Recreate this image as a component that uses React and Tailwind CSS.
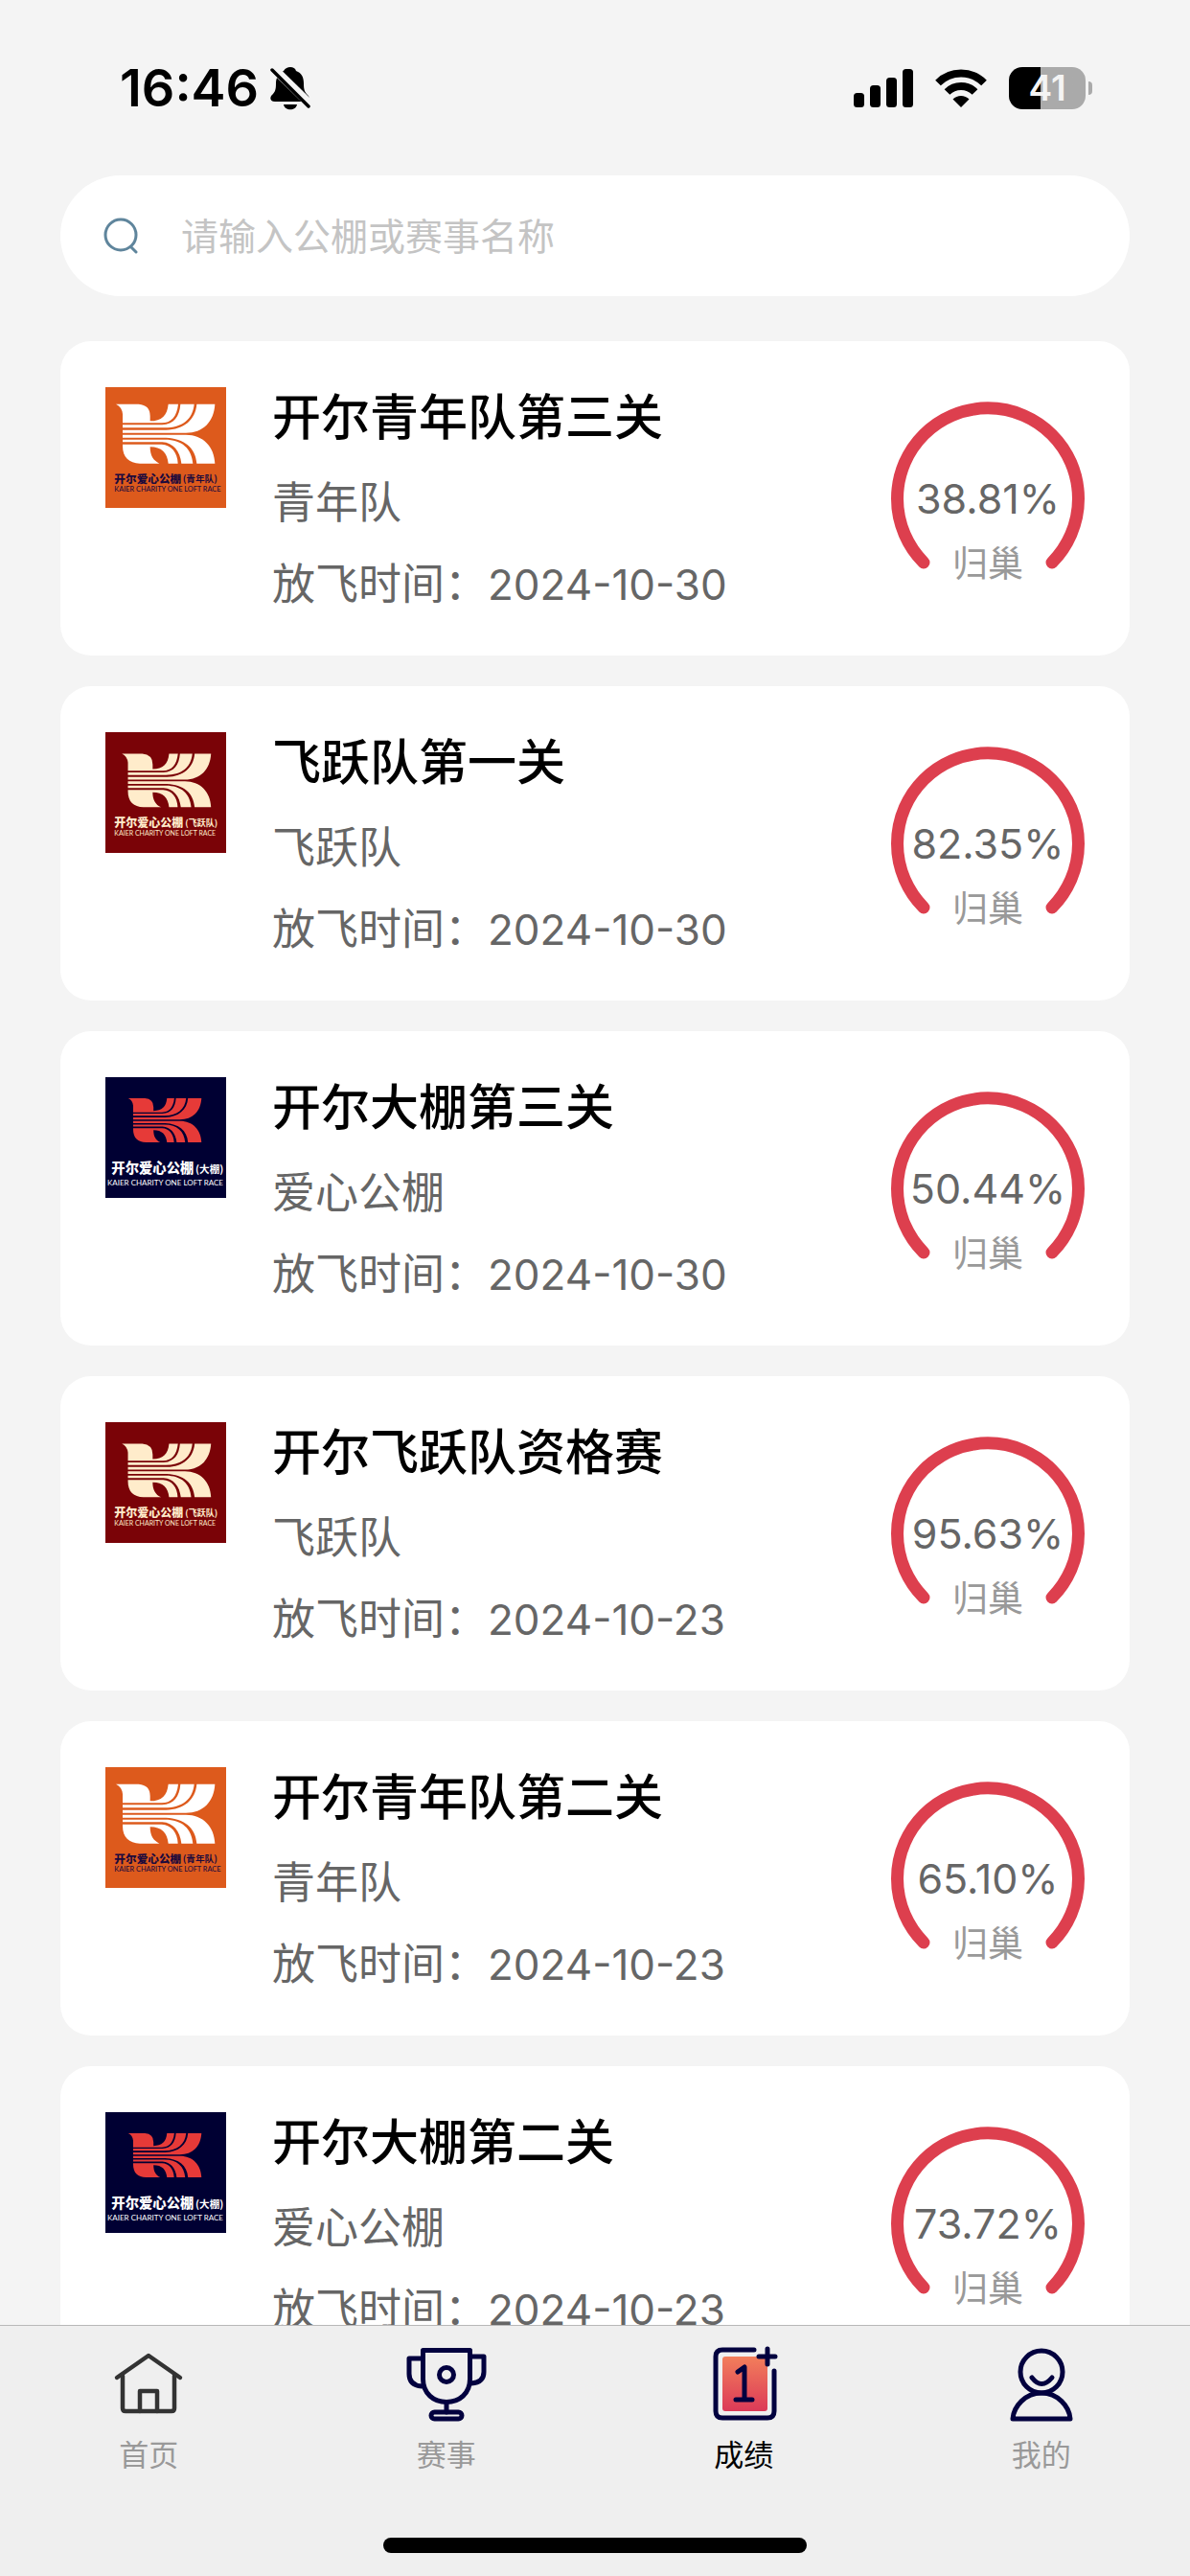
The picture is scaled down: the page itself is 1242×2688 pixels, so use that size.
import React, { useState } from "react";

const races = [
  { id: 1, title: "开尔青年队第三关", team: "青年队", date: "2024-10-30", rate: "38.81%", logo: "youth" },
  { id: 2, title: "飞跃队第一关", team: "飞跃队", date: "2024-10-30", rate: "82.35%", logo: "leap" },
  { id: 3, title: "开尔大棚第三关", team: "爱心公棚", date: "2024-10-30", rate: "50.44%", logo: "loft" },
  { id: 4, title: "开尔飞跃队资格赛", team: "飞跃队", date: "2024-10-23", rate: "95.63%", logo: "leap" },
  { id: 5, title: "开尔青年队第二关", team: "青年队", date: "2024-10-23", rate: "65.10%", logo: "youth" },
  { id: 6, title: "开尔大棚第二关", team: "爱心公棚", date: "2024-10-23", rate: "73.72%", logo: "loft" },
];

const logos = {
  youth: {
    bg: "#dd5a1c",
    mark: "#ffffff",
    text: "#1d0a3c",
    place: "translate(0 0)",
    name: { x: 28, y: 299, size: 35 },
    tag: { value: "(青年队)", x: 242, y: 298, size: 29 },
    sub: { x: 28, y: 327, size: 22, weight: 500 },
  },
  leap: {
    bg: "#7a0307",
    mark: "#ffeccb",
    text: "#ffeccb",
    place: "translate(22 20) scale(0.9)",
    name: { x: 28, y: 297, size: 36 },
    tag: { value: "(飞跃队)", x: 250, y: 295, size: 27 },
    sub: { x: 28, y: 324, size: 21, weight: 400 },
  },
  loft: {
    bg: "#000033",
    mark: "#e63a38",
    text: "#ffffff",
    place: "translate(47 27) scale(0.74)",
    name: { x: 19, y: 300, size: 43 },
    tag: { value: "(大棚)", x: 282, y: 300, size: 32 },
    sub: { x: 6, y: 339, size: 24, weight: 400 },
  },
};

function ClubLogo({ kind }) {
  const { bg, mark, text, place, name, tag, sub } = logos[kind];
  return (
    <svg viewBox="0 0 378 378" className="size-[126px] shrink-0" fill={text}>
      <rect width="378" height="378" fill={bg} />
      <g transform={place} fill={mark}>
        {/* upper wing */}
        <path d="M33 53H104Q140 56 140 90V106C176 106 194 88 197 53H228C224 92 206 112 176 112H54V84Q52 62 33 53Z" />
        <path d="M235 53H278C274 100 240 127 186 127H54V118H178C214 116 232 92 235 53Z" />
        <path d="M286 53H343C340 108 306 143 252 143H54V134H190C246 132 282 102 286 53Z" />
        {/* lower wing */}
        <path d="M54 149H252C306 149 341 186 343 239H286C282 188 246 161 190 158H54Z" />
        <path d="M54 164H186C240 164 270 192 274 239H238C234 200 212 174 178 172H54Z" />
        <path d="M54 179H176C206 180 226 204 227 239H197C194 206 176 187 140 187C140 214 150 230 169 239H108C74 238 54 220 54 184Z" />
      </g>
      <text
        x={name.x}
        y={name.y}
        fontSize={name.size}
        className="font-['Noto_Sans_CJK_SC',sans-serif] font-black"
      >
        开尔爱心公棚
      </text>
      <text
        x={tag.x}
        y={tag.y}
        fontSize={tag.size}
        className="font-['Noto_Sans_CJK_SC',sans-serif] font-bold"
      >
        {tag.value}
      </text>
      <text
        x={sub.x}
        y={sub.y}
        fontSize={sub.size}
        fontWeight={sub.weight}
        className="font-['Lato',sans-serif]"
      >
        KAIER CHARITY ONE LOFT RACE
      </text>
    </svg>
  );
}

function StatusBar() {
  return (
    <header className="flex h-[183px] shrink-0 items-start justify-between pt-[60px] pr-[102px] pl-[125px]">
      <div className="flex h-16 items-center gap-3">
        <span className="text-[54px] leading-[64px] font-semibold">16:46</span>
        <svg viewBox="0 0 42 46" className="h-[46px] w-[42px]">
          <path
            d="M21 1c3 0 5 1 6 4 6 2 8 7 8 13 0 7 1 9 4 12 3 3 2 7-2 7H5c-5 0-6-4-3-7 3-3 4-5 4-12 0-6 3-11 8-13 2-3 4-4 7-4Z"
          />
          <path d="M14 40h14c-1 7-13 7-14 0Z" />
          <path d="M1 0 42 40" stroke="#f4f4f4" strokeWidth="9" />
          <path d="M2 4 40 42" stroke="#000" strokeWidth="3.5" strokeLinecap="round" />
        </svg>
      </div>
      <div className="flex h-16 items-center gap-[23px]">
        <svg viewBox="0 0 62 40" className="h-10 w-[62px]">
          <rect x="0" y="25" width="11" height="15" rx="3.5" />
          <rect x="17" y="17" width="11" height="23" rx="3.5" />
          <rect x="34" y="9" width="11" height="31" rx="3.5" />
          <rect x="51" y="0" width="11" height="40" rx="3.5" />
        </svg>
        <svg viewBox="0 0 54 40" className="h-10 w-[54px]" fill="none" stroke="#000" strokeWidth="8">
          <path d="M3 14.500a34 34 0 0 1 48 0" />
          <path d="M12.500 24a20.500 20.500 0 0 1 29 0" />
          <path d="M18.500 31.500a12 12 0 0 1 17 0L27 40Z" fill="#000" stroke="none" />
        </svg>
        <div className="flex items-center gap-[3px]">
          <div className="flex h-11 w-20 items-center justify-center rounded-[14px] bg-linear-to-r from-black from-41% to-[#aaaaaa] to-41% text-[37px] leading-[44px] font-semibold text-[#f4f4f4]">
            41
          </div>
          <div className="h-[14px] w-1 rounded-r-full bg-[#aaaaaa]" />
        </div>
      </div>
    </header>
  );
}

function RateGauge({ rate }) {
  return (
    <div className="relative flex size-[202px] shrink-0 flex-col items-center pt-[74px]">
      <svg viewBox="0 0 202 202" className="absolute inset-0 size-full" fill="none">
        <path
          d="M34 168A94.500 94.500 0 1 1 168 168"
          stroke="#dd3f4e"
          strokeWidth="13"
          strokeLinecap="round"
        />
      </svg>
      <span className="text-[43px] leading-[54px] text-[#666666]">{rate}</span>
      <span className="mt-4 text-[37px] leading-[52px] text-[#999999]">归巢</span>
    </div>
  );
}

function RaceCard({ race }) {
  return (
    <li className="flex h-[328px] shrink-0 rounded-[32px] bg-white px-[47px] pt-12">
      <ClubLogo kind={race.logo} />
      <div className="ml-12 flex-1">
        <h2 className="text-[51px] leading-[64px] font-medium">{race.title}</h2>
        <p className="mt-[25px] text-[45px] leading-[64px] text-[#666666]">{race.team}</p>
        <p className="mt-[21px] text-[45px] leading-[64px] text-[#666666]">
          放飞时间：<time className="text-[44px]">{race.date}</time>
        </p>
      </div>
      <div className="pt-[15px]">
        <RateGauge rate={race.rate} />
      </div>
    </li>
  );
}

function HomeIcon() {
  return (
    <svg viewBox="0 0 84 84" className="size-[84px]" fill="none" stroke="#333333" strokeWidth="4.500" strokeLinecap="round" strokeLinejoin="round">
      <path d="M9 36 42 13 75 36" />
      <path d="M15 34v34q0 3 3 3h48q3 0 3-3V34" />
      <path d="M33 71V50h18v21" />
    </svg>
  );
}

function TrophyIcon() {
  return (
    <svg viewBox="0 0 84 84" className="size-[84px]" fill="none" stroke="#02013f" strokeWidth="5" strokeLinecap="round" strokeLinejoin="round">
      <path d="M17.500 7.500h49v30c0 15-11 24-24.500 24s-24.500-9-24.500-24Z" />
      <path d="M17 16H3v16q0 12 13 13M67 14h14v16q0 11-13 12" />
      <circle cx="42" cy="33" r="7.500" />
      <path d="M42 62v10" />
      <rect x="26" y="72" width="32" height="7" rx="3.500" />
    </svg>
  );
}

function ScoreIcon() {
  return (
    <svg viewBox="0 0 84 84" className="size-[84px]" fill="none" stroke="#02013f" strokeWidth="5" strokeLinecap="round" strokeLinejoin="round">
      <defs>
        <linearGradient id="score" x1="0" y1="0" x2="0" y2="1">
          <stop offset="0" stopColor="#f27e5b" />
          <stop offset="1" stopColor="#dc3a58" />
        </linearGradient>
      </defs>
      <rect x="20" y="14" width="47" height="57" rx="3" fill="url(#score)" stroke="none" />
      <path d="M53 7H20q-7 0-7 7v57q0 7 7 7h47q7 0 7-7V29" />
      <path d="M67 6v16M58 14h17" />
      <path d="M36 30l7-5v34M34 59h17" />
    </svg>
  );
}

function MineIcon() {
  return (
    <svg viewBox="0 0 84 84" className="size-[84px]" fill="none" stroke="#02013f" strokeWidth="5" strokeLinecap="round" strokeLinejoin="round">
      <circle cx="42" cy="30" r="22" />
      <path d="M32 36q10 13 21 0" />
      <path d="M12 79C13 66 25 52 42 52s29 14 30 27Z" />
    </svg>
  );
}

const tabs = [
  { key: "home", label: "首页", icon: HomeIcon },
  { key: "race", label: "赛事", icon: TrophyIcon },
  { key: "score", label: "成绩", icon: ScoreIcon },
  { key: "mine", label: "我的", icon: MineIcon },
];

function TabBar({ active, onChange }) {
  return (
    <footer className="flex h-[262px] shrink-0 flex-col border-t border-[#b8b8b8] bg-[#efefef]">
      <nav className="grid grid-cols-4 pt-[18px]">
        {tabs.map(({ key, label, icon: Icon }) => (
          <button key={key} onClick={() => onChange(key)} className="flex flex-col items-center gap-[11px]">
            <Icon />
            <span
              className={
                active === key
                  ? "text-[31px] leading-[44px] text-black"
                  : "text-[31px] leading-[44px] text-[#999999]"
              }
            >
              {label}
            </span>
          </button>
        ))}
      </nav>
      <div className="mx-auto mt-auto mb-6 h-4 w-[442px] rounded-full bg-black" />
    </footer>
  );
}

export default function App() {
  const [tab, setTab] = useState("score");
  const [keyword, setKeyword] = useState("");

  const list = races.filter((race) => race.title.includes(keyword) || race.team.includes(keyword));

  return (
    <div className="flex h-screen flex-col overflow-hidden bg-[#f4f4f4] font-['Inter','Noto_Sans_CJK_SC',sans-serif] text-black">
      <StatusBar />

      <label className="mx-[63px] flex h-[126px] shrink-0 items-center rounded-full bg-white pr-12 pl-11">
        <svg viewBox="0 0 38 38" className="size-[38px] shrink-0" fill="none" stroke="#5f859c" strokeWidth="3" strokeLinecap="round">
          <circle cx="19" cy="18" r="16" />
          <path d="m30 31 5 5" />
        </svg>
        <input
          type="text"
          value={keyword}
          onChange={(e) => setKeyword(e.target.value)}
          placeholder="请输入公棚或赛事名称"
          aria-label="请输入公棚或赛事名称"
          className="ml-11 h-16 flex-1 text-[39px] outline-none placeholder:text-[#c4c4c4]"
        />
      </label>

      <main className="mt-[47px] min-h-0 flex-1 overflow-hidden">
        <ul className="flex flex-col gap-8 px-[63px]">
          {list.map((race) => (
            <RaceCard key={race.id} race={race} />
          ))}
        </ul>
      </main>

      <TabBar active={tab} onChange={setTab} />
    </div>
  );
}
